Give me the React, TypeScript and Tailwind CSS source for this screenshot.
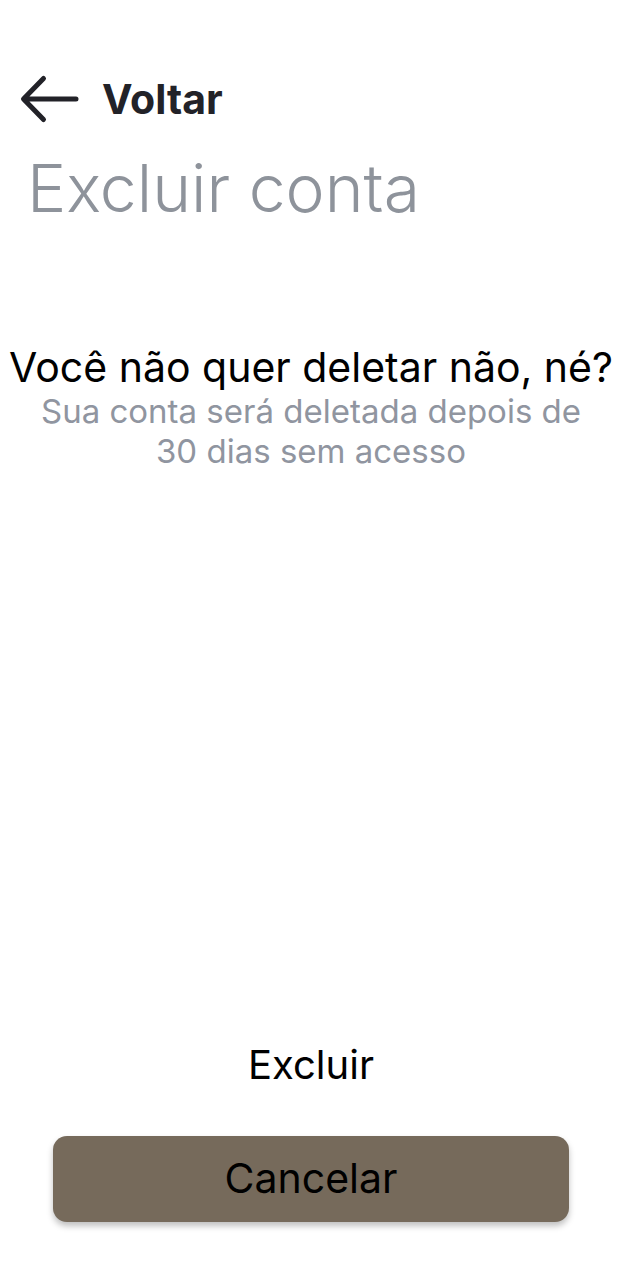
function BackArrow() {
  return (
    <svg width="60" height="50" viewBox="0 0 60 50" fill="none" className="shrink-0">
      <path d="M56 25H4M23.5 4.5L3.5 25L23.5 45.5" stroke="#222228" strokeWidth="5" strokeLinecap="round" strokeLinejoin="round" />
    </svg>
  )
}

export default function App() {
  return (
    <div className="w-full h-[1280px] bg-white flex flex-col font-['Inter',sans-serif]">
      <header className="flex items-center gap-[22px] pl-[20px] pt-[74px]">
        <BackArrow />
        <span className="text-[41px] font-bold leading-none text-[#222228]">Voltar</span>
      </header>

      <h1 className="pl-[27px] mt-[24px] text-[66px] font-light leading-[80px] text-[#8e939b]">
        Excluir conta
      </h1>

      <section className="mt-[115px] flex flex-col items-center text-center">
        <h2 className="text-[41px] leading-[48px] text-black whitespace-nowrap">Você não quer deletar não, né?</h2>
        <p className="text-[33px] leading-[40px] text-[#9095a0] max-w-[560px]">
          Sua conta será deletada depois de 30 dias sem acesso
        </p>
      </section>

      <div className="flex-1" />

      <div className="flex flex-col items-center pb-[58px]">
        <button className="text-[40px] leading-[48px] text-black">Excluir</button>
        <button className="mt-[47px] w-[516px] h-[86px] rounded-[14px] bg-[#766a5b] text-[41px] text-black shadow-[0_4px_6px_rgba(0,0,0,0.25)]">
          Cancelar
        </button>
      </div>
    </div>
  )
}
